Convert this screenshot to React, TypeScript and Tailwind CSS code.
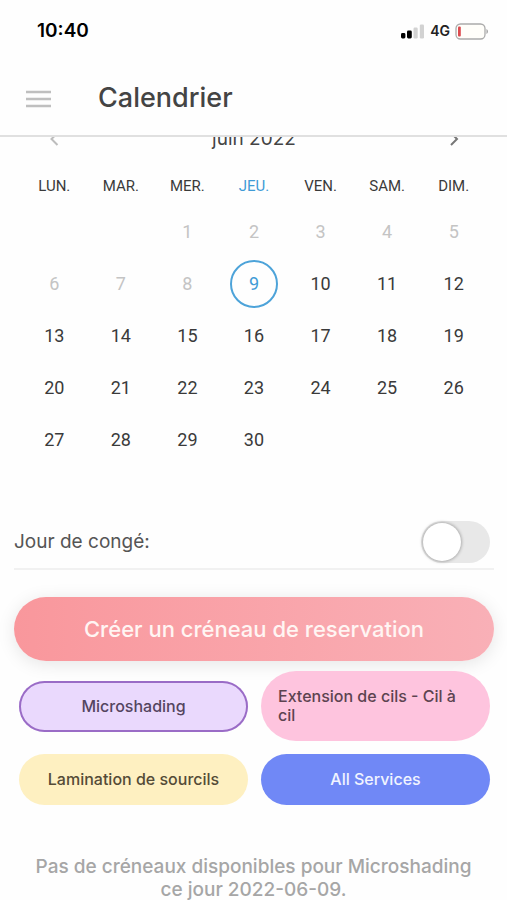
import { useState } from "react";

const weekdays = ["LUN.", "MAR.", "MER.", "JEU.", "VEN.", "SAM.", "DIM."];
const today = 9;
const weeks: (number | null)[][] = [
  [null, null, 1, 2, 3, 4, 5],
  [6, 7, 8, 9, 10, 11, 12],
  [13, 14, 15, 16, 17, 18, 19],
  [20, 21, 22, 23, 24, 25, 26],
  [27, 28, 29, 30, null, null, null],
];

function dayStyle(day: number) {
  if (day === today) return "border-2 border-[#4da3d9] text-[#3f9bd6]";
  if (day < today) return "text-[#c4c4c4]";
  return "text-[#3a3a3a]";
}

function StatusBar() {
  return (
    <div className="flex h-[62px] items-center justify-between pr-[18px] pl-[37px] text-black">
      <span className="text-[19px] font-semibold">10:40</span>
      <div className="flex items-center gap-[5px]">
        <svg width="24" height="15" viewBox="0 0 24 15" aria-hidden="true">
          <rect x="0" y="9" width="4.4" height="5.5" rx="1.4" fill="#000" />
          <rect x="6" y="6.5" width="4.8" height="8" rx="1.4" fill="#000" />
          <rect x="12.5" y="3.5" width="4.2" height="11" rx="1.2" fill="#d2d2d2" />
          <rect x="18.8" y="0.5" width="4.2" height="14" rx="1.2" fill="#d2d2d2" />
        </svg>
        <span className="text-sm font-semibold text-[#222]">4G</span>
        <svg width="34" height="17" viewBox="0 0 34 17" aria-hidden="true">
          <rect x="1" y="1" width="29" height="15" rx="4.5" fill="#fffefa" stroke="#aaa" strokeWidth="1.3" />
          <rect x="3" y="3.5" width="2.8" height="10" rx="1" fill="#dc4a4e" />
          <path d="M31.5 6v5c1.8-.7 1.8-4.3 0-5z" fill="#999" />
        </svg>
      </div>
    </div>
  );
}

function Calendar() {
  return (
    <section className="-mt-[12px] pr-5 pl-[21px]">
      <div className="flex h-[28px] items-center justify-between px-[27px]">
        <button type="button" aria-label="Mois précédent" className="text-[#bdbdbd]">
          <svg width="12" height="14" viewBox="0 0 12 14" fill="none" stroke="currentColor" strokeWidth="2">
            <path d="M9.5 1 3.5 7l6 6" />
          </svg>
        </button>
        <h2 className="text-[19px] text-[#444]">juin 2022</h2>
        <button type="button" aria-label="Mois suivant" className="text-[#777]">
          <svg width="12" height="14" viewBox="0 0 12 14" fill="none" stroke="currentColor" strokeWidth="2">
            <path d="M3 1l6 6-6 6" />
          </svg>
        </button>
      </div>
      <table className="mt-[20px] w-full table-fixed font-['Roboto','Liberation_Sans',sans-serif]">
        <thead>
          <tr className="h-[26px]">
            {weekdays.map((name) => (
              <th
                key={name}
                scope="col"
                className={`p-0 text-[15px] font-normal ${name === "JEU." ? "text-[#3f9bd6]" : "text-[#3a3a3a]"}`}
              >
                {name}
              </th>
            ))}
          </tr>
          <tr className="h-[7px]" />
        </thead>
        <tbody>
          {weeks.map((week, row) => (
            <tr key={row} className="h-[52px]">
              {week.map((day, col) => (
                <td key={col} className="p-0 text-center">
                  {day !== null && (
                    <button
                      type="button"
                      disabled={day < today}
                      className={`inline-flex size-12 items-center justify-center rounded-full align-middle text-lg ${dayStyle(day)}`}
                    >
                      {day}
                    </button>
                  )}
                </td>
              ))}
            </tr>
          ))}
        </tbody>
      </table>
    </section>
  );
}

const services = [
  { name: "Microshading", style: "inset-ring-2 inset-ring-[#9a6cc6] bg-[#ead9fd] text-[#54455f]" },
  { name: "Extension de cils - Cil à cil", style: "bg-[#fec4de] text-[#5c4350]" },
  { name: "Lamination de sourcils", style: "bg-[#fef0c1] text-[#544b37]" },
  { name: "All Services", style: "bg-[#7088f6] text-[#f1f4ff]" },
];

export default function App() {
  const [dayOff, setDayOff] = useState(false);
  return (
    <div className="min-h-screen bg-[#fefefe] font-['Inter','Liberation_Sans',sans-serif]">
      <StatusBar />
      <header className="flex h-[75px] items-center gap-[47px] border-b-2 border-[#e0e0e0] px-[26px]">
        <button type="button" aria-label="Menu" className="text-[#bfbfbf]">
          <svg width="25" height="18" viewBox="0 0 25 18" stroke="currentColor" strokeWidth="2.6">
            <path d="M0 2h25M0 9h25M0 16h25" />
          </svg>
        </button>
        <h1 className="text-[27px] font-medium text-[#444]">Calendrier</h1>
      </header>
      <main className="overflow-hidden">
        <Calendar />
        <div className="mt-[55px] mr-[13px] ml-[14px] flex h-[49px] items-start justify-between border-b-2 border-[#f1f1f1] pr-1">
          <label htmlFor="day-off" className="text-[19px] leading-[42px] text-[#555]">
            Jour de congé:
          </label>
          <input
            id="day-off"
            type="checkbox"
            role="switch"
            checked={dayOff}
            onChange={(event) => setDayOff(event.target.checked)}
            className="flex h-[42px] w-[69px] appearance-none items-center rounded-full bg-[#e8e8e8] px-[2px] before:size-[38px] before:rounded-full before:bg-white before:shadow-[0_0_3px_1px_rgba(0,0,0,0.25)] checked:justify-end checked:bg-[#f9989d]"
          />
        </div>
        <div className="pt-[27px] pr-[13px] pl-[14px]">
          <button
            type="button"
            className="h-[64px] w-full rounded-full bg-linear-to-r from-[#f9979c] to-[#f9b0b7] text-[22px] font-medium text-[#fff5f3] shadow-[0_3px_18px_rgba(0,0,0,0.1)]"
          >
            Créer un créneau de reservation
          </button>
        </div>
        <div className="mt-[10px] grid grid-cols-2 items-center gap-[13px] pr-[17px] pl-[19px]">
          {services.map((service) => (
            <button
              key={service.name}
              type="button"
              className={`flex min-h-[51px] items-center justify-center rounded-[36px] px-[17px] py-4 text-left text-base leading-[19px] font-medium ${service.style}`}
            >
              {service.name}
            </button>
          ))}
        </div>
        <p className="mt-[50px] px-[30px] text-center text-[19px] leading-[23px] font-medium text-[#a6a6a6]">
          Pas de créneaux disponibles pour Microshading ce jour 2022-06-09.
        </p>
      </main>
    </div>
  );
}
